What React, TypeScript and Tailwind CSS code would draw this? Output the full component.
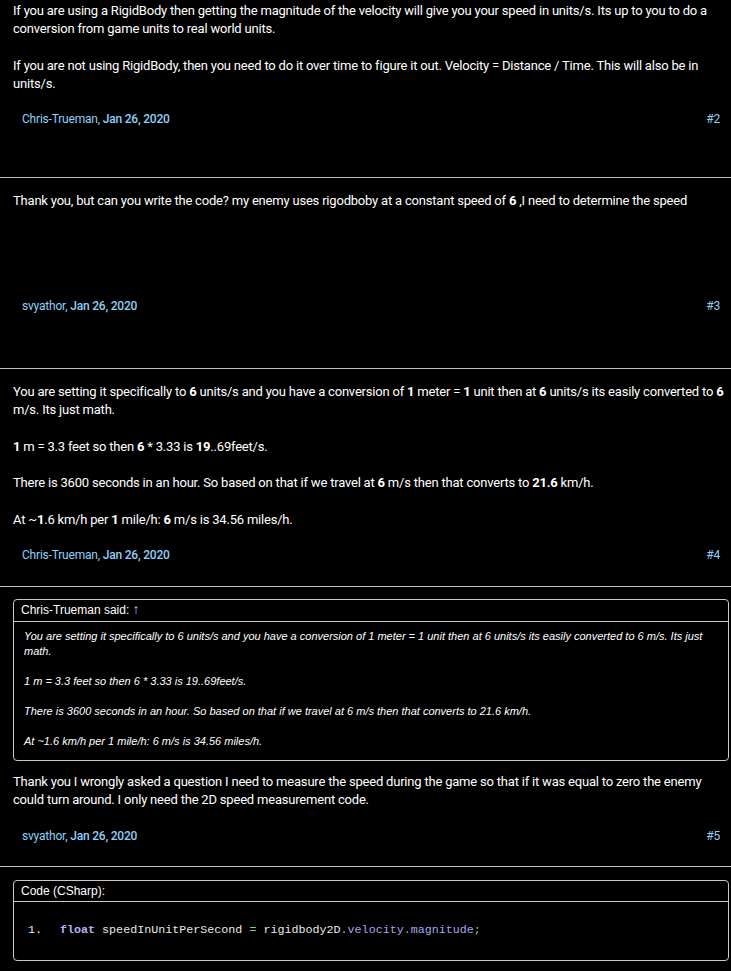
import React from "react";

const main = { fontFamily: "Roboto, 'Liberation Sans', sans-serif" };
const arial = { fontFamily: "'Liberation Sans', Arial, sans-serif" };
const mono = { fontFamily: "'Courier New', Courier, 'Liberation Mono', monospace" };

function Footer({ name, n }: { name: string; n: number }) {
  return (
    <div className="flex items-center justify-between pl-[9px] pr-[11px] text-[12px] leading-[16px] text-[#8fd0f7]">
      <span>
        {name}, <span className="font-medium">Jan 26, 2020</span>
      </span>
      <span>#{n}</span>
    </div>
  );
}

function Divider() {
  return <div className="h-px w-full bg-[#bfbfbf]" />;
}

export default function App() {
  return (
    <div className="min-h-[971px] w-[731px] overflow-hidden bg-black text-white" style={main}>
      <div className="pl-[13px] text-[13px] leading-[18.3px] tracking-[-0.2px]">
        {/* Post 2 */}
        <div className="pt-[2px]">
          <p>
            If you are using a RigidBody then getting the magnitude of the velocity will give you your speed in units/s. Its up to you to do a conversion from game units to real world units.
          </p>
          <p className="mt-[18.3px]">
            If you are not using RigidBody, then you need to do it over time to figure it out. Velocity = Distance / Time. This will also be in units/s.
          </p>
          <div className="mt-[18px]">
            <Footer name="Chris-Trueman" n={2} />
          </div>
          <div className="h-[50px]" />
        </div>
      </div>
      <Divider />
      <div className="pl-[13px] text-[13px] leading-[18.3px] tracking-[-0.2px]">
        {/* Post 3 */}
        <div className="pt-[14px]">
          <p>
            Thank you, but can you write the code? my enemy uses rigodboby at a constant speed of <b className="font-bold">6</b> ,I need to determine the speed
          </p>
          <div className="mt-[87px]">
            <Footer name="svyathor" n={3} />
          </div>
          <div className="h-[54px]" />
        </div>
      </div>
      <Divider />
      <div className="pl-[13px] text-[13px] leading-[18.3px] tracking-[-0.2px]">
        {/* Post 4 */}
        <div className="pt-[14px]">
          <p>
            You are setting it specifically to <b>6</b> units/s and you have a conversion of <b>1</b> meter = <b>1</b> unit then at <b>6</b> units/s its easily converted to <b>6</b> m/s. Its just math.
          </p>
          <p className="mt-[18.3px]">
            <b>1</b> m = 3.3 feet so then <b>6</b> * 3.33 is <b>19</b>..69feet/s.
          </p>
          <p className="mt-[18.3px]">
            There is 3600 seconds in an hour. So based on that if we travel at <b>6</b> m/s then that converts to <b>21.6</b> km/h.
          </p>
          <p className="mt-[18.3px]">
            At ~<b>1</b>.6 km/h per <b>1</b> mile/h: <b>6</b> m/s is 34.56 miles/h.
          </p>
          <div className="mt-[18px]">
            <Footer name="Chris-Trueman" n={4} />
          </div>
          <div className="h-[23px]" />
        </div>
      </div>
      <Divider />
      <div className="pl-[13px] text-[13px] leading-[18.3px] tracking-[-0.2px]">
        {/* Post 5 */}
        <div className="pt-[12px]">
          <div className="mr-[2px] rounded-[4px] border border-[#c8c8c8]" style={arial}>
            <div className="border-b border-[#c8c8c8] px-[7px] pb-[3px] pt-[1px] text-[12px] leading-[16px] tracking-normal">
              Chris-Trueman said: <span className="text-[14px] text-[#8fd0f7]">↑</span>
            </div>
            <div className="px-[10px] pb-[11px] pt-[7px] text-[11px] italic leading-[15px] tracking-normal">
              <p>
                You are setting it specifically to 6 units/s and you have a conversion of 1 meter = 1 unit then at 6 units/s its easily converted to 6 m/s. Its just math.
              </p>
              <p className="mt-[15px]">1 m = 3.3 feet so then 6 * 3.33 is 19..69feet/s.</p>
              <p className="mt-[15px]">
                There is 3600 seconds in an hour. So based on that if we travel at 6 m/s then that converts to 21.6 km/h.
              </p>
              <p className="mt-[15px]">At ~1.6 km/h per 1 mile/h: 6 m/s is 34.56 miles/h.</p>
            </div>
          </div>
          <p className="mt-[12px]">
            Thank you I wrongly asked a question I need to measure the speed during the game so that if it was equal to zero the enemy could turn around. I only need the 2D speed measurement code.
          </p>
          <div className="mt-[18px]">
            <Footer name="svyathor" n={5} />
          </div>
          <div className="h-[22px]" />
        </div>
      </div>
      <Divider />
      <div className="pl-[13px]">
        <div className="pt-[13px]">
          <div className="mr-[2px] rounded-[4px] border border-[#c8c8c8]">
            <div
              className="border-b border-[#c8c8c8] px-[7px] py-[2px] text-[12px] leading-[16px]"
              style={arial}
            >
              Code (CSharp):
            </div>
            <div className="flex pb-[22px] pl-[14px] pt-[20px] text-[11.7px] leading-[16px]" style={mono}>
              <span className="w-[32px] text-[#e8e8e8]">1.</span>
              <span className="text-[#e8e8e8]">
                <span className="font-bold text-[#b6b6f0]">float</span> speedInUnitPerSecond{" "}
                <span className="text-[#6fdc6f]">=</span> rigidbody2D<span className="text-[#6fdc6f]">.</span>
                <span className="text-[#a6a6ee]">velocity</span>
                <span className="text-[#6fdc6f]">.</span>
                <span className="text-[#a6a6ee]">magnitude</span>
                <span className="text-[#6fdc6f]">;</span>
              </span>
            </div>
          </div>
        </div>
      </div>
    </div>
  );
}
